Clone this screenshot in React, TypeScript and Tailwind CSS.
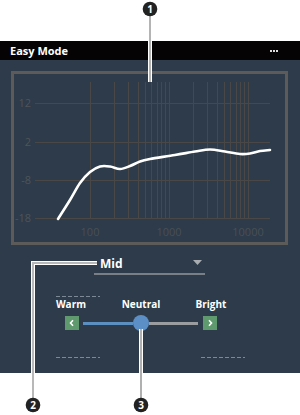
import React from "react";

const FONT = "'Open Sans', sans-serif";

// log scale: 100Hz at x=90, one decade = 79px
const fx = (f: number) => 90 + 79 * Math.log10(f / 100);
// dB scale: 12dB at y=103.3, -18dB at y=218.3
const dy = (db: number) => 103.3 + ((12 - db) * 115) / 30;

const curvePts: [number, number][] = [
  [58, 219], [70, 200], [80, 183], [90, 172], [100, 166.5], [110, 166.5],
  [120, 169], [130, 166], [140, 161.5], [150, 159], [175, 155], [195, 151.5],
  [210, 149.5], [225, 151.5], [240, 154], [250, 153.5], [260, 151], [270, 150],
];

function smoothPath(pts: [number, number][]) {
  let d = `M${pts[0][0]},${pts[0][1]}`;
  for (let i = 0; i < pts.length - 1; i++) {
    const p0 = pts[i - 1] || pts[i];
    const p1 = pts[i];
    const p2 = pts[i + 1];
    const p3 = pts[i + 2] || p2;
    const c1x = p1[0] + (p2[0] - p0[0]) / 6;
    const c1y = p1[1] + (p2[1] - p0[1]) / 6;
    const c2x = p2[0] - (p3[0] - p1[0]) / 6;
    const c2y = p2[1] - (p3[1] - p1[1]) / 6;
    d += ` C${c1x.toFixed(1)},${c1y.toFixed(1)} ${c2x.toFixed(1)},${c2y.toFixed(1)} ${p2[0]},${p2[1]}`;
  }
  return d;
}

function EqChart() {
  const freqs: number[] = [];
  for (const dec of [100, 1000]) for (let m = 1; m <= 9; m++) freqs.push(dec * m);
  freqs.push(10000);

  return (
    <svg width={271} height={168} viewBox="14 74 271 168" className="block">
      {[12, 2, -8, -18].map((db) => (
        <g key={db}>
          <line x1={35} x2={270} y1={Math.round(dy(db)) + 0.5} y2={Math.round(dy(db)) + 0.5} stroke="#4a4846" strokeWidth={1} />
          <text x={31} y={dy(db) + 4} textAnchor="end" fontSize={11} fill="#4f5459" fontFamily={FONT}>
            {db}
          </text>
        </g>
      ))}
      {freqs.map((f) => (
        <line key={f} x1={Math.round(fx(f)) + 0.5} x2={Math.round(fx(f)) + 0.5} y1={82} y2={219} stroke="#4a4846" strokeWidth={1} />
      ))}
      {[100, 1000, 10000].map((f) => (
        <text key={f} x={fx(f)} y={236} textAnchor="middle" fontSize={11} fill="#4a4f55" fontFamily={FONT}>
          {f}
        </text>
      ))}
      <path d={smoothPath(curvePts)} fill="none" stroke="#ffffff" strokeWidth={2.6} strokeLinecap="round" />
    </svg>
  );
}

function StepButton({ dir }: { dir: "left" | "right" }) {
  return (
    <div className="w-[14px] h-[14px] bg-[#5e9a6d] flex items-center justify-center">
      <svg width={8} height={8} viewBox="0 0 8 8">
        <path
          d={dir === "left" ? "M5,1.2 L2.5,4 L5,6.8" : "M3,1.2 L5.5,4 L3,6.8"}
          fill="none"
          stroke="#ffffff"
          strokeWidth={1.6}
        />
      </svg>
    </div>
  );
}

function Dashes() {
  return <div className="w-[44px] h-px bg-[repeating-linear-gradient(90deg,#7d8995_0_4px,transparent_4px_6px)]" />;
}

function Callouts() {
  const circle = (cx: number, cy: number, n: number) => (
    <g>
      <circle cx={cx} cy={cy} r={7.3} fill="#222222" />
      <text x={cx} y={cy + 3.6} textAnchor="middle" fontSize={10} fontWeight={700} fill="#ffffff" fontFamily={FONT}>
        {n}
      </text>
    </g>
  );
  return (
    <svg width={300} height={415} className="absolute left-0 top-0 pointer-events-none">
      <g fill="none" strokeLinejoin="miter">
        <line x1={150} y1={16} x2={150} y2={82} stroke="#ffffff" strokeWidth={4} />
        <line x1={150} y1={16} x2={150} y2={82} stroke="#b4b4b4" strokeWidth={2} />
        <polyline points="97,263 33,263 33,398" stroke="#ffffff" strokeWidth={4} />
        <polyline points="97,263 33,263 33,398" stroke="#b8b8b8" strokeWidth={2} />
        <line x1={141} y1={329} x2={141} y2={398} stroke="#ffffff" strokeWidth={4} />
        <line x1={141} y1={329} x2={141} y2={398} stroke="#b0b0b0" strokeWidth={2} />
      </g>
      {circle(150, 9, 1)}
      {circle(33, 405, 2)}
      {circle(141, 405, 3)}
    </svg>
  );
}

export default function App() {
  return (
    <div className="relative w-[300px] h-[415px] bg-white overflow-hidden font-['Open_Sans',sans-serif]">
      <div className="h-[41px]" />
      <div className="h-[332px] bg-[#2d3b4a] flex flex-col">
        {/* Header */}
        <div className="h-[19px] bg-[#050304] flex items-center justify-between pl-[10px] pr-[22px]">
          <span className="text-[11px] font-bold text-white leading-none">Easy Mode</span>
          <div className="flex gap-px">
            <div className="w-[2px] h-[2px] bg-[#dddddd]" />
            <div className="w-[2px] h-[2px] bg-[#dddddd]" />
            <div className="w-[2px] h-[2px] bg-[#dddddd]" />
          </div>
        </div>

        {/* Chart */}
        <div className="mt-[11px] ml-[11px] w-[277px] h-[174px] border-[3px] border-[#5c5b5a]">
          <EqChart />
        </div>

        {/* Dropdown */}
        <div className="mt-[9px] ml-[94px] w-[111px] h-[21px] border-b-2 border-[#7a7f85] flex items-center justify-between pl-[6px] pr-[3px]">
          <span className="text-[12px] font-bold text-white leading-none">Mid</span>
          <svg width={9} height={6} viewBox="0 0 9 6" className="mb-[2px]">
            <path d="M0,0 L9,0 L4.5,5 Z" fill="#a9adb2" />
          </svg>
        </div>

        {/* Tone slider */}
        <div className="mt-[21px] ml-[56px]">
          <Dashes />
        </div>
        <div className="ml-[36px] w-[210px] grid grid-cols-3 text-center text-[10px] font-bold text-white leading-[12px] mt-[1px]">
          <span>Warm</span>
          <span>Neutral</span>
          <span>Bright</span>
        </div>
        <div className="mt-[6px] ml-[65px] flex items-center h-[14px]">
          <StepButton dir="left" />
          <div className="ml-[4px] w-[50px] h-[3px] bg-[#5b8ec1]" />
          <div className="w-[16px] h-[16px] rounded-full bg-[#5c8fc6] shrink-0" />
          <div className="w-[49px] h-[3px] bg-[#9a9c9f]" />
          <div className="ml-[5px]">
            <StepButton dir="right" />
          </div>
        </div>
        <div className="mt-[27px] ml-[56px] w-[189px] flex justify-between">
          <Dashes />
          <Dashes />
        </div>
      </div>
      <Callouts />
    </div>
  );
}
